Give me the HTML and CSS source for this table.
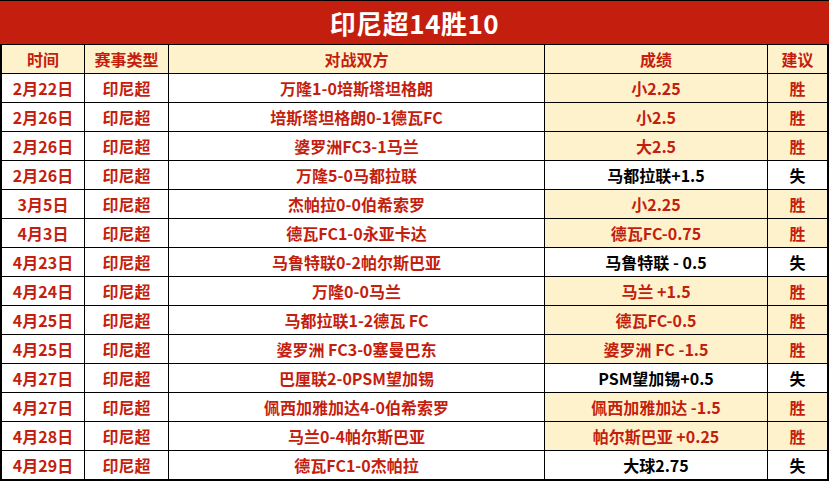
FILE: index.html
```html
<!DOCTYPE html>
<html lang="zh">
<head>
<meta charset="utf-8">
<link rel="stylesheet" href="styles.css">
</head>
<body>
<div class="sheet">
  <div class="title">印尼超14胜10</div>
  <div class="hd">时间</div><div class="hd">赛事类型</div><div class="hd">对战双方</div><div class="hd">成绩</div><div class="hd">建议</div>

  <div class="c">2月22日</div><div class="c">印尼超</div><div class="c">万隆1-0培斯塔坦格朗</div><div class="c win">小2.25</div><div class="c win">胜</div>
  <div class="c">2月26日</div><div class="c">印尼超</div><div class="c">培斯塔坦格朗0-1德瓦FC</div><div class="c win">小2.5</div><div class="c win">胜</div>
  <div class="c">2月26日</div><div class="c">印尼超</div><div class="c">婆罗洲FC3-1马兰</div><div class="c win">大2.5</div><div class="c win">胜</div>
  <div class="c">2月26日</div><div class="c">印尼超</div><div class="c">万隆5-0马都拉联</div><div class="c lose">马都拉联+1.5</div><div class="c lose">失</div>
  <div class="c">3月5日</div><div class="c">印尼超</div><div class="c">杰帕拉0-0伯希索罗</div><div class="c win">小2.25</div><div class="c win">胜</div>
  <div class="c">4月3日</div><div class="c">印尼超</div><div class="c">德瓦FC1-0永亚卡达</div><div class="c win">德瓦FC-0.75</div><div class="c win">胜</div>
  <div class="c">4月23日</div><div class="c">印尼超</div><div class="c">马鲁特联0-2帕尔斯巴亚</div><div class="c lose">马鲁特联 - 0.5</div><div class="c lose">失</div>
  <div class="c">4月24日</div><div class="c">印尼超</div><div class="c">万隆0-0马兰</div><div class="c win">马兰 +1.5</div><div class="c win">胜</div>
  <div class="c">4月25日</div><div class="c">印尼超</div><div class="c">马都拉联1-2德瓦 FC</div><div class="c win">德瓦FC-0.5</div><div class="c win">胜</div>
  <div class="c">4月25日</div><div class="c">印尼超</div><div class="c">婆罗洲 FC3-0塞曼巴东</div><div class="c win">婆罗洲 FC -1.5</div><div class="c win">胜</div>
  <div class="c">4月27日</div><div class="c">印尼超</div><div class="c">巴厘联2-0PSM望加锡</div><div class="c lose">PSM望加锡+0.5</div><div class="c lose">失</div>
  <div class="c">4月27日</div><div class="c">印尼超</div><div class="c">佩西加雅加达4-0伯希索罗</div><div class="c win">佩西加雅加达 -1.5</div><div class="c win">胜</div>
  <div class="c">4月28日</div><div class="c">印尼超</div><div class="c">马兰0-4帕尔斯巴亚</div><div class="c win">帕尔斯巴亚 +0.25</div><div class="c win">胜</div>
  <div class="c">4月29日</div><div class="c">印尼超</div><div class="c">德瓦FC1-0杰帕拉</div><div class="c lose">大球2.75</div><div class="c lose">失</div>
</div>
</body>
</html>
```
FILE: styles.css
```css
html, body {
  margin: 0;
  padding: 0;
  background: #ffffff;
}
.sheet {
  width: 829px;
  height: 481px;
  box-sizing: border-box;
  background: #000000;
  padding: 1px 2px 2px 2px;
  display: grid;
  grid-template-columns: 82px 83px 375px 222px 59px;
  grid-template-rows: 43px repeat(15, 28px);
  column-gap: 1px;
  row-gap: 1px;
  font-family: "Noto Sans CJK SC", "Noto Sans", sans-serif;
  font-weight: 700;
  font-size: 16px;
}
.title {
  grid-column: 1 / -1;
  margin: 0 -2px;
  background: #c41e0e;
  color: #ffffff;
  font-size: 26px;
  display: flex;
  align-items: center;
  justify-content: center;
  letter-spacing: 0.5px;
}
.hd, .c {
  display: flex;
  align-items: center;
  justify-content: center;
  white-space: nowrap;
  line-height: 1;
}
.hd {
  background: #fef2cd;
  color: #c41e0e;
}
.c {
  background: #ffffff;
  color: #c41e0e;
}
.c.win {
  background: #fef2cd;
  color: #c41e0e;
}
.c.lose {
  background: #ffffff;
  color: #000000;
}
```
